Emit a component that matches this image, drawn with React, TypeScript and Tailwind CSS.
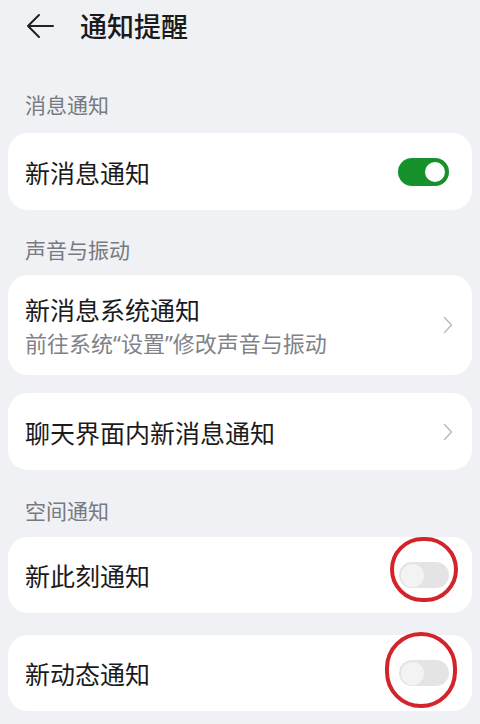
import React from 'react';

// Toggle switch (visual only)
const Toggle = ({ on }: { on: boolean }) =>
  on ? (
    <div className="flex h-[28px] w-[51px] items-center justify-end rounded-full bg-[#17912b] pr-[2px]">
      <div className="h-[24px] w-[24px] rounded-full border-2 border-[#17912b] bg-white" />
    </div>
  ) : (
    <div className="flex h-[26px] w-[50px] items-center justify-start rounded-full bg-[#e4e4e4] pl-[2px]">
      <div className="h-[23px] w-[23px] rounded-full bg-[#f3f3f3]" />
    </div>
  );

const Chevron = () => (
  <svg width="10" height="18" viewBox="0 0 10 18" fill="none" className="mr-[-4px]">
    <path d="M1.5 1.5 L8.5 9 L1.5 16.5" stroke="#bdbdbd" strokeWidth="1.6" strokeLinecap="round" strokeLinejoin="round" />
  </svg>
);

const SectionLabel = ({ text, className = '' }: { text: string; className?: string }) => (
  <div className={`px-[17px] text-[21px] leading-[28px] text-[#777a80] ${className}`}>{text}</div>
);

const Row = ({
  title,
  children,
  className = '',
}: {
  title: string;
  children: React.ReactNode;
  className?: string;
}) => (
  <div className={`flex h-[76px] items-center justify-between rounded-[20px] bg-white pl-[17px] pr-[23px] ${className}`}>
    <span className="text-[25px] leading-[32px] text-[#1b1b1b]">{title}</span>
    {children}
  </div>
);

// narrow latin quote inside CJK text
const Q = ({ c }: { c: string }) => <span style={{ fontFamily: '"Noto Sans", sans-serif' }}>{c}</span>;

export default function App() {
  return (
    <div
      className="relative min-h-[724px] w-[480px] overflow-hidden bg-[#eff1f5]"
      style={{ fontFamily: '"Noto Sans CJK SC", "Noto Sans", sans-serif' }}
    >
      {/* header */}
      <div className="flex h-[52px] items-center pl-[25px]">
        <svg width="30" height="26" viewBox="0 0 30 26" fill="none">
          <path d="M28 13 H3 M14 2 L3 13 L14 24" stroke="#222" strokeWidth="2" strokeLinecap="round" strokeLinejoin="round" />
        </svg>
        <span className="ml-[25px] text-[27px] font-medium leading-[34px] text-[#1a1a1a]">通知提醒</span>
      </div>

      <div className="px-2">
        <SectionLabel text="消息通知" className="pt-[38px] pb-[15px]" />
        <Row title="新消息通知" className="h-[77px]">
          <Toggle on />
        </Row>

        <SectionLabel text="声音与振动" className="pt-[25px] pb-[12px]" />
        <div className="flex h-[100px] items-center justify-between rounded-[20px] bg-white pl-[17px] pr-[23px]">
          <div className="flex flex-col">
            <span className="text-[25px] leading-[32px] text-[#1b1b1b]">新消息系统通知</span>
            <span className="mt-[3px] text-[22px] leading-[28px] text-[#808287]">
              前往系统<Q c="“" />设置<Q c="”" />修改声音与振动
            </span>
          </div>
          <Chevron />
        </div>

        <Row title="聊天界面内新消息通知" className="mt-[18px] h-[77px]">
          <Chevron />
        </Row>

        <SectionLabel text="空间通知" className="pt-[26px] pb-[13px]" />
        <Row title="新此刻通知" className="h-[74px]">
          <Toggle on={false} />
        </Row>
        <Row title="新动态通知" className="mt-[22px] h-[75px]">
          <Toggle on={false} />
        </Row>
      </div>

      {/* red annotation circles */}
      <div className="absolute left-[390px] top-[537px] h-[65px] w-[68px] rounded-full border-[4px] border-[#d3232b]" />
      <div className="absolute left-[385px] top-[632px] h-[76px] w-[72px] rounded-full border-[4px] border-[#d3232b]" />
    </div>
  );
}
